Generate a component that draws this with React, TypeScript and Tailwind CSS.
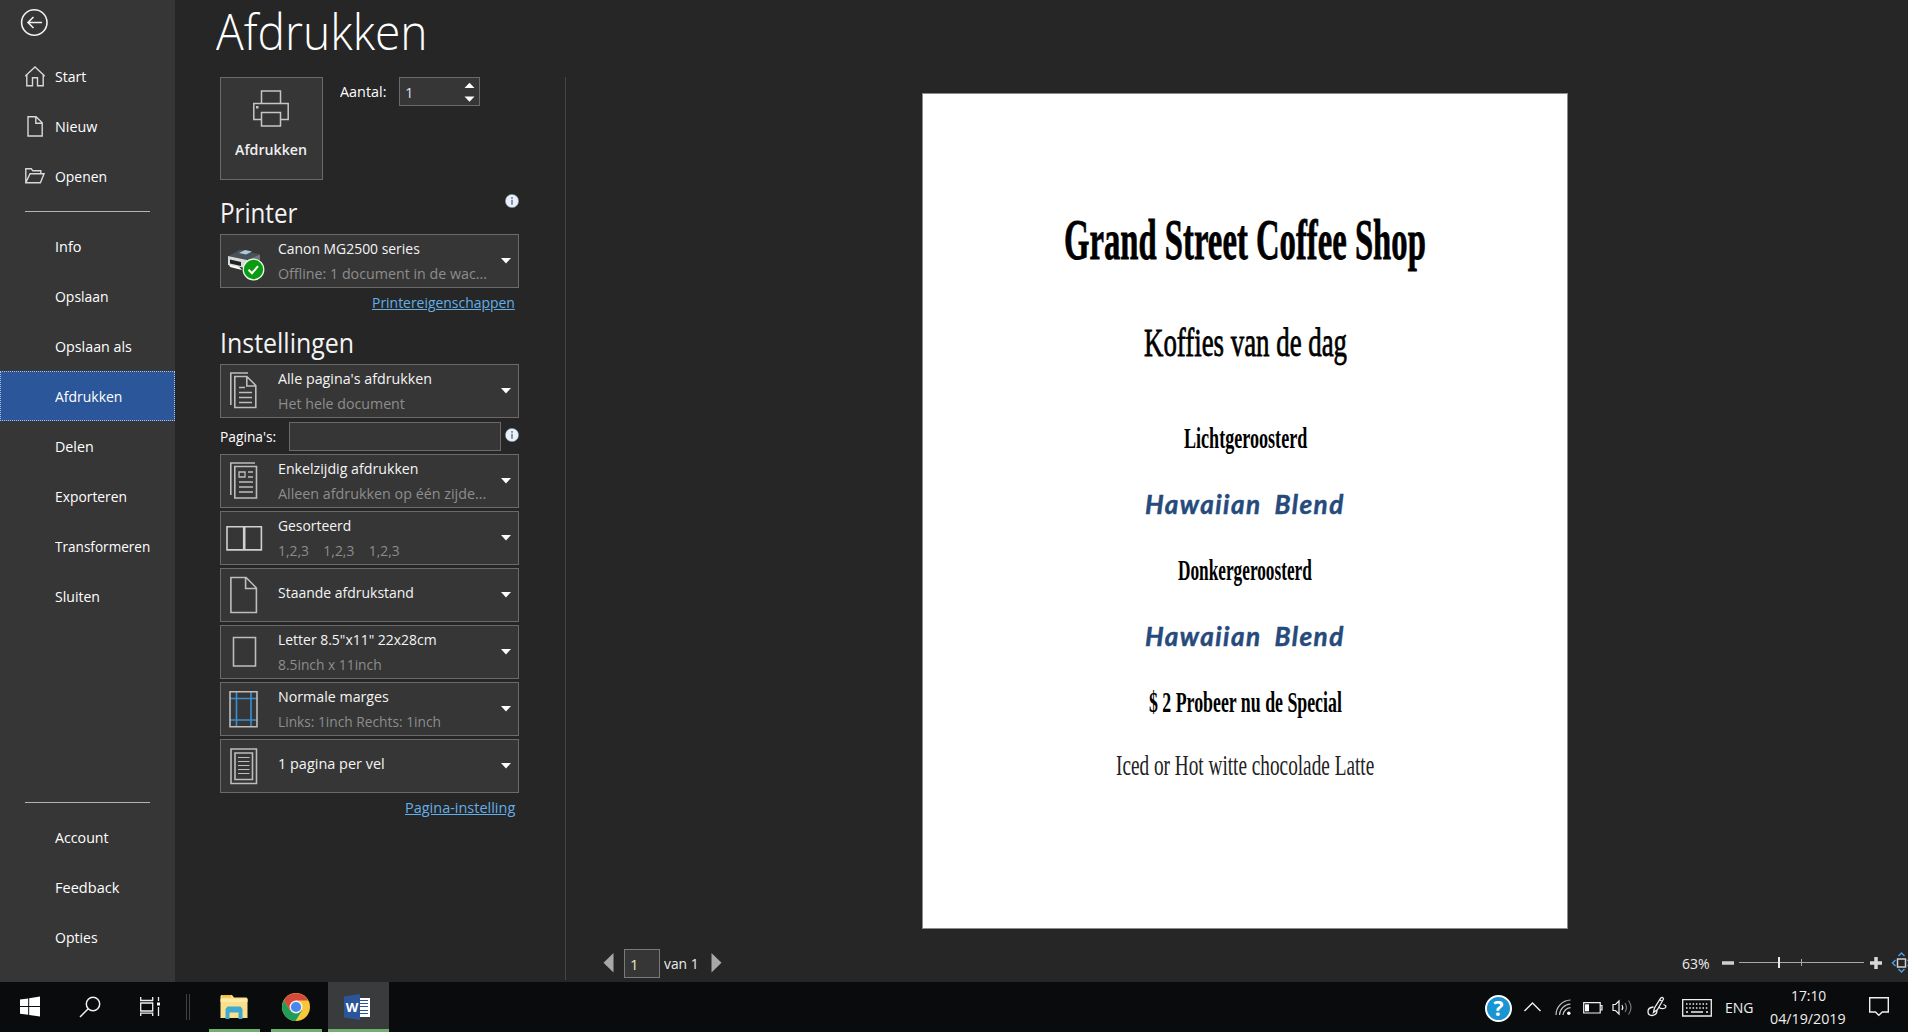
import { useLayoutEffect, useRef, useState, type ReactNode } from "react";

/** Text that is condensed or expanded horizontally to fill the width of its box. */
function Fit({ className, children }: { className: string; children: ReactNode }) {
  const box = useRef<HTMLSpanElement>(null);
  const text = useRef<HTMLSpanElement>(null);
  const [scale, setScale] = useState(1);
  useLayoutEffect(() => {
    if (box.current && text.current && text.current.offsetWidth > 0) {
      setScale(box.current.offsetWidth / text.current.offsetWidth);
    }
  }, [children]);
  return (
    <span ref={box} className={`block shrink-0 ${className}`}>
      <span
        ref={text}
        className="inline-block origin-left whitespace-pre align-top"
        style={{ transform: `scaleX(${scale})` }}
      >
        {children}
      </span>
    </span>
  );
}

function NavItem({ label, width, icon, active }: { label: string; width: string; icon?: ReactNode; active?: boolean }) {
  return (
    <div
      className={`flex h-[50px] w-[175px] items-center text-[15px] leading-5 text-white ${
        active ? "border border-dotted border-[#a9bde0] bg-[#2b579a] pl-[24px]" : "pl-[25px]"
      }`}
    >
      <div className="w-[30px]">{icon}</div>
      <Fit className={width}>{label}</Fit>
    </div>
  );
}

function HomeIcon() {
  return (
    <svg width="20" height="21" viewBox="0 0 20 21" fill="none" stroke="#d8d8d8" strokeWidth="1.4">
      <path d="M.8 10.500V9.500L10 1l9.200 8.500v1M1.800 9v10.800H7.500v-8h5v8h5.700V9" />
    </svg>
  );
}

function FileIcon() {
  return (
    <svg width="20" height="21" viewBox="0 0 20 21" fill="none" stroke="#d8d8d8" strokeWidth="1.4">
      <path d="M3 .8h8l6.200 6V20H3zM10.800 1v6.200h6.200" />
    </svg>
  );
}

function FolderIcon() {
  return (
    <svg width="20" height="16" viewBox="0 0 20 16" fill="none" stroke="#d8d8d8" strokeWidth="1.4">
      <path d="M.8 14.800V.8h5.500l1.500 2h8v3M.8 14.800 5 5.800h14l-3.600 9z" />
    </svg>
  );
}

function InfoDot() {
  return (
    <svg width="14" height="14" viewBox="0 0 14 14">
      <circle cx="7" cy="7" r="6.600" fill="#e9f0f8" stroke="#8094a8" strokeWidth=".6" />
      <path d="M7 3v1.700M7 5.800v5" stroke="#5f7690" strokeWidth="1.500" />
    </svg>
  );
}

function Caret() {
  return (
    <svg width="10" height="6" viewBox="0 0 10 6" className="shrink-0">
      <path d="M0 0h10L5 5.500z" fill="#fff" />
    </svg>
  );
}

function Dropdown({ icon, title, sub }: { icon: ReactNode; title: ReactNode; sub?: ReactNode }) {
  return (
    <div className="flex h-[54px] w-[299px] items-center border border-[#6a6a6a] bg-[#363636] pr-[7px]">
      <div className="flex w-[57px] shrink-0 pl-[5px]">{icon}</div>
      <div className={`flex flex-1 flex-col gap-[5px] text-[15px] leading-5 text-[#f4f4f4] ${sub ? "pb-[1px]" : "pb-[6px]"}`}>
        {title}
        {sub && <div className="text-[#8d8d8d]">{sub}</div>}
      </div>
      <Caret />
    </div>
  );
}

const iconProps = { width: 38, height: 40, viewBox: "0 0 38 40", fill: "none", stroke: "#bdbdbd", strokeWidth: 1.6 };

function PrinterDevice() {
  return (
    <svg width="40" height="40" viewBox="0 0 40 40">
      <path d="M3 15 14 8.500l20 5-13 5.500z" fill="#4a5156" />
      <path d="m13 12 6-3 7 1.500-6 3z" fill="#a9cbe0" />
      <path d="m2 15 19 4v8L2 24z" fill="#d8dadc" />
      <path d="m21 19 13-5.500v8l-13 8z" fill="#70777b" />
      <path d="m4 18.500 11 2.500v4L4 22.500z" fill="#222" />
      <path d="m3 23.500 10 2 3 3.500-12-3z" fill="#fafafa" />
      <circle cx="27.500" cy="28.500" r="10.300" fill="#0c9a12" stroke="#e6ffe6" strokeWidth="1.200" />
      <path d="m22.500 28.700 3.500 3.500 6-7" fill="none" stroke="#fff" strokeWidth="2" />
    </svg>
  );
}

function PagesIcon() {
  return (
    <svg {...iconProps}>
      <path d="M4.800 34V2H22M8.800 5.500h12l9 9V36.500h-21zM20.800 5.500v9.500h9" />
      <path d="M13 16.500h6M13 21.500h13M13 26.500h13M13 31.500h13" strokeWidth="1.300" />
    </svg>
  );
}

function OneSidedIcon() {
  return (
    <svg {...iconProps}>
      <path d="M4.800 34V2H29M8.800 5.500h21.700V37H8.800z" />
      <path d="M13 11h6v5h-6zM22 11h5M22 16h5M13 21h14M13 26h14M13 31h14" strokeWidth="1.300" />
    </svg>
  );
}

function CollatedIcon() {
  return (
    <svg {...iconProps}>
      <path d="M1 8.700h16.700v23.200H1zM18.700 8.700h16.700v23.200H18.700z" stroke="#d0d0d0" />
    </svg>
  );
}

function PortraitIcon() {
  return (
    <svg {...iconProps}>
      <path d="M4.900 2.500h15.200l10.300 10.500v24.500H4.900zM19.600 2.500v11h10.800" />
    </svg>
  );
}

function PaperIcon() {
  return (
    <svg {...iconProps}>
      <path d="M7.500 5.500h22v28.500h-22z" />
    </svg>
  );
}

function MarginsIcon() {
  return (
    <svg {...iconProps}>
      <path d="M10.500 3v34M25 3v34M4 9.500h27M4 31h27" stroke="#3b8fd0" />
      <path d="M4 2.800h27v35H4z" />
    </svg>
  );
}

function SheetIcon() {
  return (
    <svg {...iconProps}>
      <path d="M5 3h25.500v34.500H5zM9 7h17.500v26.500H9z" />
      <path d="M12 11.500h11.500M12 15.500h11.500M12 19.500h11.500M12 23.500h11.500M12 27.500h11.500" strokeWidth="1.200" />
    </svg>
  );
}

function Sidebar() {
  return (
    <nav className="flex w-[175px] shrink-0 flex-col bg-[#363636]">
      <div className="h-[51px] pl-[20px] pt-[8px]">
        <svg width="29" height="29" viewBox="0 0 29 29" fill="none" stroke="#f2f2f2" strokeWidth="1.600">
          <circle cx="14.300" cy="14.500" r="12.700" />
          <path d="M22 14.500H8M13.500 9 8 14.500l5.500 5.500" />
        </svg>
      </div>
      <NavItem label="Start" width="w-[31px]" icon={<HomeIcon />} />
      <NavItem label="Nieuw" width="w-[42px]" icon={<FileIcon />} />
      <NavItem label="Openen" width="w-[52px]" icon={<FolderIcon />} />
      <div className="mb-[9px] ml-[25px] mt-[10px] h-px w-[125px] bg-[#b4b4b4]" />
      <NavItem label="Info" width="w-[26px]" />
      <NavItem label="Opslaan" width="w-[54px]" />
      <NavItem label="Opslaan als" width="w-[77px]" />
      <NavItem label="Afdrukken" width="w-[67px]" active />
      <NavItem label="Delen" width="w-[39px]" />
      <NavItem label="Exporteren" width="w-[72px]" />
      <NavItem label="Transformeren" width="w-[95px]" />
      <NavItem label="Sluiten" width="w-[45px]" />
      <div className="mb-[9px] ml-[25px] mt-auto h-px w-[125px] bg-[#b4b4b4]" />
      <NavItem label="Account" width="w-[54px]" />
      <NavItem label="Feedback" width="w-[64px]" />
      <div className="mb-[20px]">
        <NavItem label="Opties" width="w-[43px]" />
      </div>
    </nav>
  );
}

function Settings() {
  return (
    <section className="flex w-[391px] shrink-0 flex-col text-white">
      <div className="h-[77px] pl-[41px]">
        <Fit className="w-[212px] text-[49px] font-light leading-[62px]">Afdrukken</Fit>
      </div>
      <div className="flex h-[903px] flex-col border-r border-[#454545] pl-[45px]">
        <div className="flex h-[103px] items-start">
          <div className="flex size-[103px] flex-col items-center border border-[#6a6a6a] bg-[#363636] pr-px pt-[12px]">
            <svg width="36" height="37" viewBox="0 0 36 37" fill="none" stroke="#c6c6c6" strokeWidth="1.500">
              <path d="M8.500 13.500V1h19v12.500M8.500 29.500H.8v-16h34.400v16h-7.700M8.500 22.500h19V36h-19z" />
              <path d="M3 16h2.500v2.500H3z" fill="#c6c6c6" stroke="none" />
            </svg>
            <Fit className="mt-[12px] w-[72px] text-[15px] font-semibold leading-5 text-[#f0f0f0]">Afdrukken</Fit>
          </div>
          <Fit className="ml-[17px] mt-[4px] w-[46px] text-[15px] leading-5">Aantal:</Fit>
          <div className="ml-[13px] flex h-[29px] w-[81px] items-center justify-between border border-[#6a6a6a] bg-[#363636] pl-[5px] pr-[4px] text-[15px] leading-5 text-[#d9dcf5]">
            <span>1</span>
            <svg width="11" height="20" viewBox="0 0 11 20" fill="#fff">
              <path d="M.5 6h10L5.500.8zM.5 14.500h10L5.500 19.700z" />
            </svg>
          </div>
        </div>
        <div className="flex h-[54px] w-[299px] justify-between">
          <Fit className="mt-[15px] w-[77px] text-[27px] leading-[36px] text-[#f4f4f4]">Printer</Fit>
          <div className="mt-[14px]">
            <InfoDot />
          </div>
        </div>
        <Dropdown
          icon={<PrinterDevice />}
          title={<Fit className="w-[142px]">Canon MG2500 series</Fit>}
          sub={<Fit className="w-[209px]">Offline: 1 document in de wac...</Fit>}
        />
        <div className="flex h-[34px] w-[299px] justify-end pr-[4px] pt-[4px] text-[15px] leading-5 text-[#63afe6]">
          <Fit className="w-[143px]">
            <u>Printereigenschappen</u>
          </Fit>
        </div>
        <Fit className="mt-[3px] h-[39px] w-[134px] text-[27px] leading-[36px] text-[#f4f4f4]">Instellingen</Fit>
        <Dropdown
          icon={<PagesIcon />}
          title={<Fit className="w-[154px]">Alle pagina's afdrukken</Fit>}
          sub={<Fit className="w-[127px]">Het hele document</Fit>}
        />
        <div className="flex h-[36px] w-[299px] justify-between pt-[4px] text-[15px] leading-5">
          <Fit className="mt-[4px] w-[56px]">Pagina's:</Fit>
          <div className="flex">
            <div className="h-[29px] w-[212px] border border-[#6a6a6a] bg-[#363636]" />
            <div className="ml-[4px] mt-[6px]">
              <InfoDot />
            </div>
          </div>
        </div>
        <div className="flex flex-col gap-[3px]">
          <Dropdown
            icon={<OneSidedIcon />}
            title={<Fit className="w-[141px]">Enkelzijdig afdrukken</Fit>}
            sub={<Fit className="w-[208px]">Alleen afdrukken op één zijde...</Fit>}
          />
          <Dropdown
            icon={<CollatedIcon />}
            title={<Fit className="w-[73px]">Gesorteerd</Fit>}
            sub={<Fit className="w-[122px]">1,2,3    1,2,3    1,2,3</Fit>}
          />
          <Dropdown icon={<PortraitIcon />} title={<Fit className="w-[136px]">Staande afdrukstand</Fit>} />
          <Dropdown
            icon={<PaperIcon />}
            title={<Fit className="w-[159px]">Letter 8.5"x11" 22x28cm</Fit>}
            sub={<Fit className="w-[104px]">8.5inch x 11inch</Fit>}
          />
          <Dropdown
            icon={<MarginsIcon />}
            title={<Fit className="w-[111px]">Normale marges</Fit>}
            sub={<Fit className="w-[163px]">Links: 1inch Rechts: 1inch</Fit>}
          />
          <Dropdown icon={<SheetIcon />} title={<Fit className="w-[107px]">1 pagina per vel</Fit>} />
        </div>
        <div className="flex w-[299px] justify-end pr-[4px] pt-[4px] text-[15px] leading-5 text-[#63afe6]">
          <Fit className="w-[110px]">
            <u>Pagina-instelling</u>
          </Fit>
        </div>
      </div>
    </section>
  );
}

function Preview() {
  return (
    <main className="flex flex-1 flex-col">
      <div className="ml-[356px] mt-[93px] flex h-[836px] w-[646px] flex-col items-center border border-[#8c8c8c] bg-white pt-[108px] font-['Liberation_Serif',serif] text-black">
        <Fit className="h-[110px] w-[362px] text-[58px] font-bold leading-[76px] [-webkit-text-stroke:0.8px_black]">Grand Street Coffee Shop</Fit>
        <Fit className="h-[96px] w-[203px] text-[41px] leading-[60px] [-webkit-text-stroke:0.8px_black]">Koffies van de dag</Fit>
        <Fit className="h-[66px] w-[123px] text-[30px] font-bold leading-[60px]">Lichtgeroosterd</Fit>
        <Fit className="h-[66px] w-[200px] font-['Lato',sans-serif] text-[27px] font-bold italic leading-[60px] tracking-[1.500px] text-[#264a7c] [-webkit-text-stroke:0.5px_#264a7c] [word-spacing:6px]">
          Hawaiian Blend
        </Fit>
        <Fit className="h-[66px] w-[134px] text-[30px] font-bold leading-[60px]">Donkergeroosterd</Fit>
        <Fit className="h-[66px] w-[200px] font-['Lato',sans-serif] text-[27px] font-bold italic leading-[60px] tracking-[1.500px] text-[#264a7c] [-webkit-text-stroke:0.5px_#264a7c] [word-spacing:6px]">
          Hawaiian Blend
        </Fit>
        <Fit className="h-[63px] w-[193px] text-[30px] font-bold leading-[60px]">$ 2 Probeer nu de Special</Fit>
        <Fit className="w-[258px] text-[30px] leading-[60px] text-[#222]">Iced or Hot witte chocolade Latte</Fit>
      </div>
      <div className="mt-auto flex h-[33px] items-start pb-1 text-[15px] leading-5 text-[#ececec]">
        <svg width="11" height="20" viewBox="0 0 11 20" className="ml-[37px] mt-[4px]">
          <path d="M10.500 0v19.500L.5 9.750z" fill="#a8a8a8" />
        </svg>
        <div className="ml-[10px] h-[29px] w-[36px] border border-[#7a7a7a] bg-[#363636] pl-[5px] pt-[4px] text-[#e6e6c4]">1</div>
        <Fit className="ml-[4px] mt-[4px] w-[35px]">van 1</Fit>
        <svg width="11" height="20" viewBox="0 0 11 20" className="ml-[12px] mt-[4px]">
          <path d="M.5 0v19.500l10-9.750z" fill="#a8a8a8" />
        </svg>
        <Fit className="ml-auto mt-[4px] w-[28px]">63%</Fit>
        <svg width="198" height="24" viewBox="0 0 198 24" fill="none">
          <path d="M12 14h12" stroke="#cfcfcf" strokeWidth="3.500" />
          <path d="M29 13.500h125" stroke="#a8a8a8" />
          <path d="M69 8v11" stroke="#e8e8e8" strokeWidth="2" />
          <path d="M91.500 10v7" stroke="#a8a8a8" />
          <path d="M160 14h12M166 8v12" stroke="#d8d8d8" strokeWidth="3.500" />
          <path d="M187.500 10h8v8h-8z" stroke="#d0d0d0" strokeWidth="1.500" />
          <path d="m188.500 7 3-3 3 3M188.500 20l3 3 3-3M185.500 11l-3 3 3 3M197.500 11l3 3-3 3" stroke="#4b9be0" strokeWidth="1.500" />
        </svg>
      </div>
    </main>
  );
}

function Taskbar() {
  return (
    <footer className="flex h-[50px] w-full shrink-0 bg-[#0a0b0c] text-[15px] leading-5 text-[#f0f0f0]">
      <svg width="20" height="21" viewBox="0 0 20 20" className="ml-[20px] mt-[14px]" fill="#fff">
        <path d="M0 3 8.200 1.900V9.600H0zM9.200 1.700 20 0v9.600H9.200zM0 10.600h8.200v7.700L0 17.200zM9.200 10.600H20V20L9.200 18.500z" />
      </svg>
      <svg width="22" height="22" viewBox="0 0 22 22" className="ml-[39px] mt-[14px]" fill="none" stroke="#f0f0f0" strokeWidth="1.500">
        <circle cx="14" cy="8" r="6.700" />
        <path d="M9.200 12.800 1 21" />
      </svg>
      <svg width="21" height="21" viewBox="0 0 21 21" className="ml-[39px] mt-[14px]" fill="none" stroke="#f0f0f0" strokeWidth="1.300">
        <path d="M.7 1v3.500h12V1M.7 7h12v8h-12zM.7 20v-2.800h12V20M18.500 1v4M18.500 11v9" />
        <path d="M17 6.500h3v3h-3z" fill="#fff" stroke="none" />
      </svg>
      <div className="ml-[25px] mt-[12px] h-[26px] w-[4px] border-x border-[#3e4142]" />
      <div className="ml-[19px] flex h-[50px] w-[51px] flex-col items-center justify-between pt-[12px]">
        <svg width="28" height="26" viewBox="0 0 28 26" className="mr-[2px]">
          <path d="M.5 2 1.500 1H12l2 2.500h12.500l1 1V24H.5z" fill="#fbe08c" />
          <path d="M2 1h9v2.500H2z" fill="#f2c23e" />
          <path d="M.5 5h27v3H.5z" fill="#fdeaa6" />
          <path d="M5.500 25V15l2-2.500h13l2 2.500v10h-4v-6.500h-9V25z" fill="#3fa9d3" />
        </svg>
        <div className="h-[3px] w-full bg-[#74ad70]" />
      </div>
      <div className="ml-[11px] flex h-[50px] w-[51px] flex-col items-center justify-between pt-[11px]">
        <svg width="28" height="28" viewBox="0 0 28 28" className="mr-[2px]">
          <circle cx="14" cy="14" r="14" fill="#fbc73a" />
          <path d="M1.900 7A14 14 0 0 0 13.500 28L20 17.500 14 14 8 17.500z" fill="#1f9d58" />
          <path d="M1.900 7A14 14 0 0 1 26.200 7.400H14L8 17.500z" fill="#d8483a" />
          <circle cx="14" cy="14" r="6.500" fill="#f3f3f3" />
          <circle cx="14" cy="14" r="5.100" fill="#4a86ee" />
        </svg>
        <div className="h-[3px] w-full bg-[#74ad70]" />
      </div>
      <div className="ml-[6px] flex h-[50px] w-[61px] flex-col items-center justify-between bg-[#3a3b3c] pt-[12px]">
        <div className="mr-[3px] flex h-[26px] w-[26px] items-center">
          <div className="flex h-[26px] w-[16px] items-center justify-center bg-[#2a5699] text-[13px] font-bold text-white [clip-path:polygon(0_10%,100%_0,100%_100%,0_90%)]">
            W
          </div>
          <div className="flex h-[19px] w-[10px] flex-col justify-evenly bg-white pr-[2px]">
            <div className="h-px bg-[#2a5699]" />
            <div className="h-px bg-[#2a5699]" />
            <div className="h-px bg-[#2a5699]" />
            <div className="h-px bg-[#2a5699]" />
            <div className="h-px bg-[#2a5699]" />
          </div>
        </div>
        <div className="h-[3px] w-full bg-[#74ad70]" />
      </div>

      <div className="ml-auto mt-[13px] flex size-[27px] items-center justify-center rounded-full border-2 border-white bg-[#1a94d2] text-[21px] font-bold leading-none text-white">
        ?
      </div>
      <svg width="17" height="10" viewBox="0 0 17 10" className="ml-[12px] mt-[20px]" fill="none" stroke="#f0f0f0" strokeWidth="1.400">
        <path d="m.5 9 8-8 8 8" />
      </svg>
      <svg width="17" height="17" viewBox="0 0 17 17" className="ml-[14px] mt-[17px]" fill="none" stroke="#c8c8c8" strokeWidth="1.200">
        <path d="M1 16A15 15 0 0 1 15.500 1M4.500 16A11.500 11.500 0 0 1 15.500 5M8 16a8 8 0 0 1 7.500-7.300" />
        <circle cx="13.800" cy="14.200" r="1.700" fill="#fff" stroke="none" />
      </svg>
      <svg width="20" height="12" viewBox="0 0 20 12" className="ml-[11px] mt-[20px]" fill="none" stroke="#f0f0f0" strokeWidth="1.200">
        <path d="M.7.700h16.500v10.300H.7zM17.500 3.500H19v4.500h-1.500" />
        <path d="M2 2.300h4v7H2z" fill="#fff" stroke="none" />
      </svg>
      <svg width="21" height="17" viewBox="0 0 21 17" className="ml-[9px] mt-[17px]" fill="none" stroke="#f0f0f0" strokeWidth="1.200">
        <path d="M1 5.500h2.500L7 2v13l-3.500-3.500H1zM10 6q1.500 2.500 0 5" />
        <path d="M13 4q3 4.500 0 9M16.500 1.500q5 7 0 14" stroke="#777" />
      </svg>
      <svg width="21" height="21" viewBox="0 0 21 21" className="ml-[14px] mt-[14px]" fill="none" stroke="#f0f0f0" strokeWidth="1.300">
        <path d="M6.500 16.500 7.500 12 13.500 2.500q2-2.500 3 .5L10.500 13.500zM13 4l2.500 1.500M6.500 11q-5.500.5-5.500 4.500t4 4q5-.5 5-5M12 11.500q3 2 6 .5 2.500-2-1.500-3.500" />
      </svg>
      <svg width="30" height="18" viewBox="0 0 30 18" className="ml-[14px] mt-[17px]" fill="none" stroke="#f0f0f0" strokeWidth="1.300">
        <path d="M.7.700h28.600v16.300H.7z" />
        <path d="M4 5h22M4 9h22" strokeDasharray="1.500 1.800" />
        <path d="M4 13h2M9 13h12M24 13h2" />
      </svg>
      <Fit className="ml-[13px] mt-[15px] w-[29px]">ENG</Fit>
      <div className="ml-[16px] mt-[3px] flex w-[76px] flex-col items-center gap-[3px]">
        <Fit className="w-[35px]">17:10</Fit>
        <Fit className="w-[76px]">04/19/2019</Fit>
      </div>
      <svg width="20" height="20" viewBox="0 0 20 20" className="ml-[23px] mr-[19px] mt-[15px]" fill="none" stroke="#f0f0f0" strokeWidth="1.400">
        <path d="M.7.700h18.600v14.300h-6L9.800 18.300 6.500 15H.7z" />
      </svg>
    </footer>
  );
}

export default function App() {
  return (
    <div className="flex h-[1032px] w-[1908px] flex-col overflow-hidden bg-[#262626] font-['Open_Sans',sans-serif]">
      <div className="flex h-[982px]">
        <Sidebar />
        <Settings />
        <Preview />
      </div>
      <Taskbar />
    </div>
  );
}
